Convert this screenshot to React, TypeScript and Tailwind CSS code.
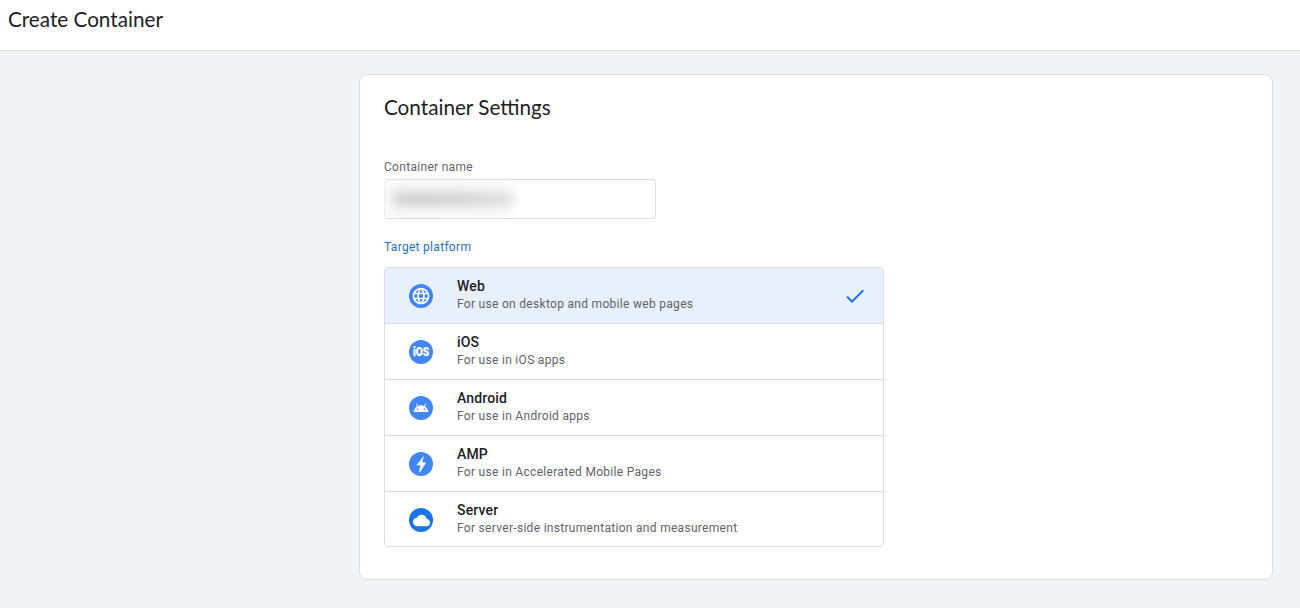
import { MdCheck, MdCloud, MdLanguage } from "react-icons/md";
import { clsx } from "clsx";
import type { ReactNode } from "react";

interface Platform {
    name: string;
    description: string;
    color: string;
    icon: ReactNode;
}

const IosMark = () => (
    <svg viewBox="0 0 24 24" className="size-6" fill="#fff">
        <text
            x="4"
            y="16.4"
            textLength="16.2"
            lengthAdjust="spacingAndGlyphs"
            stroke="#fff"
            strokeWidth=".25"
            className="font-['Roboto',sans-serif] text-[12.5px] font-black"
        >
            iOS
        </text>
    </svg>
);

const AndroidHead = () => (
    <svg viewBox="0 0 24 24" className="size-4" fill="#fff">
        <path d="M17.6 9.48l1.84-3.18c.16-.31.04-.69-.26-.85-.29-.15-.65-.06-.83.22l-1.88 3.24c-2.86-1.21-6.08-1.21-8.94 0L5.65 5.67c-.19-.29-.58-.38-.87-.2-.28.18-.37.54-.22.83L6.4 9.48C3.3 11.25 1.28 14.44 1 18h22c-.28-3.56-2.3-6.75-5.4-8.52zM7 15.25c-.69 0-1.25-.56-1.25-1.25s.56-1.25 1.25-1.25 1.25.56 1.25 1.25-.56 1.25-1.25 1.25zm10 0c-.69 0-1.25-.56-1.25-1.25s.56-1.25 1.25-1.25 1.25.56 1.25 1.25-.56 1.25-1.25 1.25z" />
    </svg>
);

const Bolt = () => (
    <svg viewBox="0 0 24 24" className="size-6" fill="#fff">
        <path d="M14.9 3.7 7.4 13.3h3.9l-1.2 7h.9l6.2-9.7h-3.9l1.6-6.9z" />
    </svg>
);

const platforms: Platform[] = [
    {
        name: "Web",
        description: "For use on desktop and mobile web pages",
        color: "bg-[#4285f4]",
        icon: <MdLanguage className="size-5 text-white" />,
    },
    {
        name: "iOS",
        description: "For use in iOS apps",
        color: "bg-[#4285f4]",
        icon: <IosMark />,
    },
    {
        name: "Android",
        description: "For use in Android apps",
        color: "bg-[#4285f4]",
        icon: <AndroidHead />,
    },
    {
        name: "AMP",
        description: "For use in Accelerated Mobile Pages",
        color: "bg-[#4285f4]",
        icon: <Bolt />,
    },
    {
        name: "Server",
        description: "For server-side instrumentation and measurement",
        color: "bg-[#1a73e8]",
        icon: <MdCloud className="mt-px size-[17px] text-white" />,
    },
];

const PlatformRow = ({ platform, selected }: { platform: Platform; selected: boolean }) => (
    <li
        className={clsx(
            "flex h-14 items-start border-b border-[#dadce0] pl-6 pr-4 last:h-[54px] last:border-b-0",
            selected && "bg-[#e8f0fe]"
        )}
    >
        <span className={clsx("mt-4 flex size-6 items-center justify-center rounded-full", platform.color)}>
            {platform.icon}
        </span>
        <div className="ml-6 flex-1 pt-2">
            <p className="text-sm leading-5 font-medium tracking-[0.15px] text-[#202124]">{platform.name}</p>
            <p className="text-xs leading-4 tracking-[0.3px] text-[#5f6368]">{platform.description}</p>
        </div>
        {selected && <MdCheck className="mt-4 size-6 text-[#1a73e8]" />}
    </li>
);

const App = () => {
    return (
        <div className="flex h-screen flex-col overflow-hidden bg-[#f1f3f4] font-['Roboto',sans-serif]">
            <header className="h-[51px] shrink-0 border-b border-[#dadce0] bg-white px-2 pt-[7px]">
                <h1 className="font-['Lato',sans-serif] text-[20.7px] leading-6 text-[#202124]">Create Container</h1>
            </header>
            <main className="flex flex-1 justify-end pt-[23px] pr-[27px]">
                <section className="h-[506px] w-[914px] rounded-lg border border-[#dadce0] bg-white px-6 pt-5">
                    <h2 className="font-['Lato',sans-serif] text-[20.7px] leading-6 text-[#202124]">
                        Container Settings
                    </h2>
                    <p className="mt-10 text-xs leading-4 tracking-[0.3px] text-[#5f6368]">Container name</p>
                    <div className="mt-1 flex h-10 w-[272px] items-center rounded border border-l-[#f0f0f0] border-[#dadce0]">
                        {/* redacted value */}
                        <div className="flex h-[38px] w-[132px] items-center bg-linear-to-r from-[#fafafa] from-90% to-white pl-2">
                            <span className="h-3 w-[120px] rounded bg-linear-to-r from-[#c6c6c6] via-[#c8c8c8] to-[#dadada] blur-[6px]" />
                        </div>
                    </div>
                    <p className="mt-5 text-xs leading-4 tracking-[0.3px] text-[#1f6fcf]">Target platform</p>
                    <ul className="mt-3 h-[280px] w-[500px] overflow-hidden rounded border border-[#dadce0]">
                        {platforms.map((platform) => (
                            <PlatformRow key={platform.name} platform={platform} selected={platform.name === "Web"} />
                        ))}
                    </ul>
                </section>
            </main>
        </div>
    );
};

export default App;
